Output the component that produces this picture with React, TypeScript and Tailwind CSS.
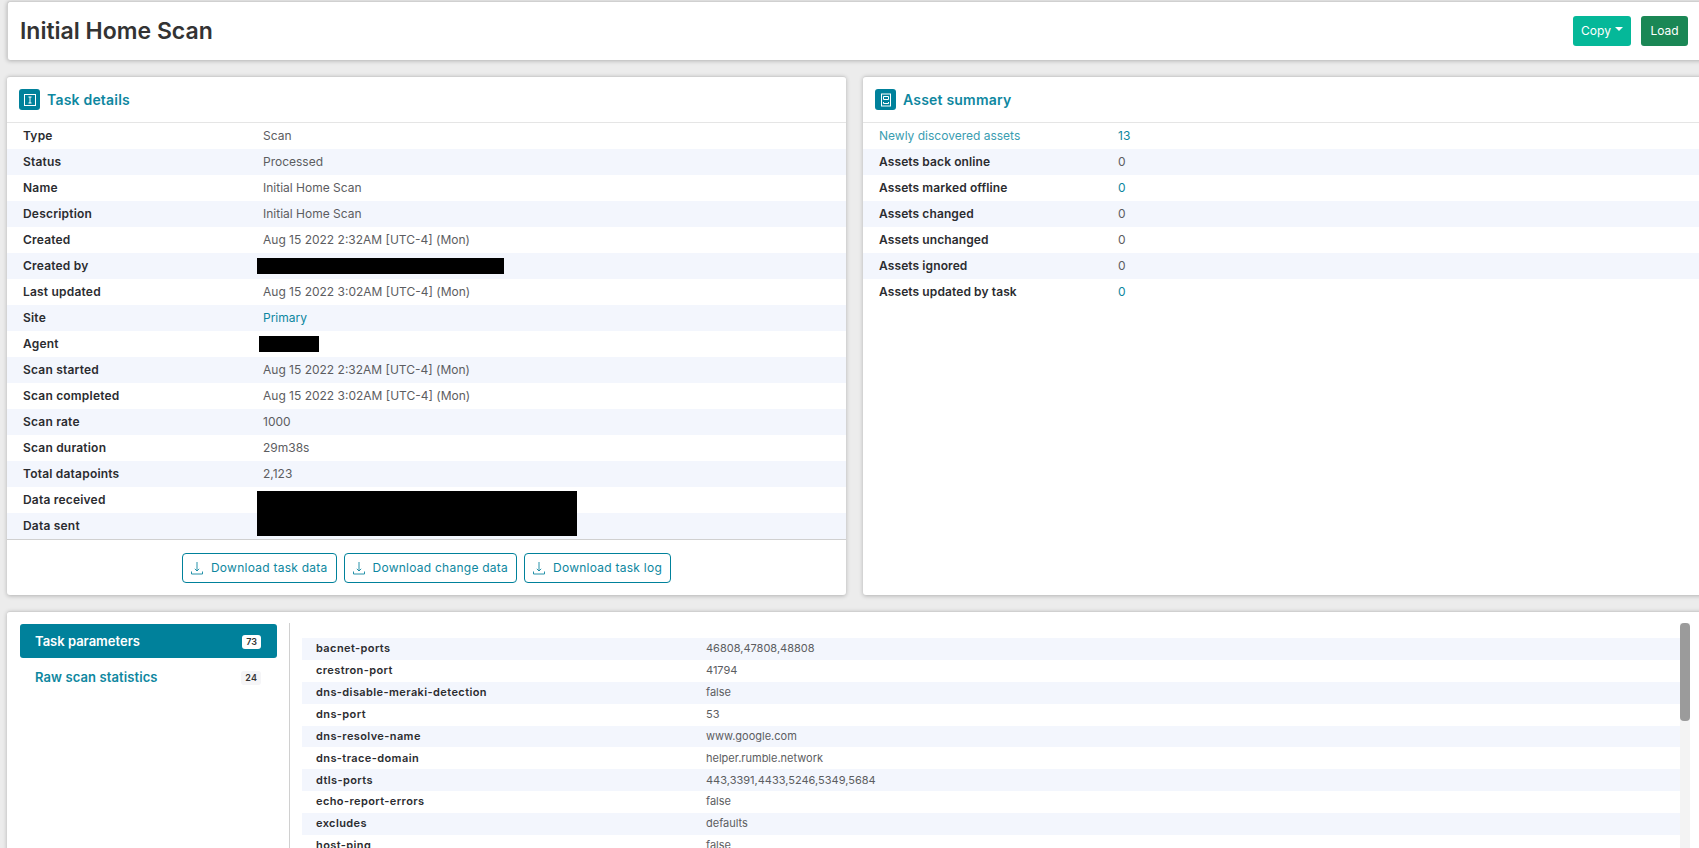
import React from "react";

const font = "font-['Inter','Liberation_Sans',sans-serif]";

const detailRows: [string, string, string?][] = [
  ["Type", "Scan"],
  ["Status", "Processed"],
  ["Name", "Initial Home Scan"],
  ["Description", "Initial Home Scan"],
  ["Created", "Aug 15 2022 2:32AM [UTC-4] (Mon)"],
  ["Created by", "", "w-[247px] -ml-[6px]"],
  ["Last updated", "Aug 15 2022 3:02AM [UTC-4] (Mon)"],
  ["Site", "Primary"],
  ["Agent", "", "w-[60px] -ml-[4px]"],
  ["Scan started", "Aug 15 2022 2:32AM [UTC-4] (Mon)"],
  ["Scan completed", "Aug 15 2022 3:02AM [UTC-4] (Mon)"],
  ["Scan rate", "1000"],
  ["Scan duration", "29m38s"],
  ["Total datapoints", "2,123"],
  ["Data received", ""],
  ["Data sent", ""],
];

const assetRows = [
  { label: "Newly discovered assets", value: "13", link: true, valueLink: true },
  { label: "Assets back online", value: "0" },
  { label: "Assets marked offline", value: "0", valueLink: true },
  { label: "Assets changed", value: "0" },
  { label: "Assets unchanged", value: "0" },
  { label: "Assets ignored", value: "0" },
  { label: "Assets updated by task", value: "0", valueLink: true },
];

const params = [
  ["bacnet-ports", "46808,47808,48808"],
  ["crestron-port", "41794"],
  ["dns-disable-meraki-detection", "false"],
  ["dns-port", "53"],
  ["dns-resolve-name", "www.google.com"],
  ["dns-trace-domain", "helper.rumble.network"],
  ["dtls-ports", "443,3391,4433,5246,5349,5684"],
  ["echo-report-errors", "false"],
  ["excludes", "defaults"],
  ["host-ping", "false"],
];

const DownloadIcon = () => (
  <svg width="14" height="14" viewBox="0 0 14 14" fill="none" stroke="currentColor" strokeWidth="0.9">
    <path d="M7 1v9M4.8 7.8 7 10l2.2-2.2M1.5 10.5v2.5h11v-2.5" />
  </svg>
);

const InfoIcon = () => (
  <svg width="14" height="14" viewBox="0 0 14 14" fill="none" stroke="white" strokeWidth="1">
    <rect x="1.5" y="1.5" width="11" height="11" />
    <path d="M5.5 4h3M7 4v6M5.5 10h3" />
  </svg>
);

const AssetIcon = () => (
  <svg width="14" height="14" viewBox="0 0 14 14" fill="none" stroke="white" strokeWidth="1">
    <rect x="2.5" y="1" width="9" height="12" />
    <path d="M4.5 3.5h5v3h-5z" />
    <path d="M4.5 9v1.5h5V9" />
  </svg>
);

const CardHeader = ({ icon, title }: { icon: React.ReactNode; title: string }) => (
  <div className="flex items-center gap-[7px] h-[46px] pl-3 border-b border-[#e5e5e5]">
    <div className="w-[21px] h-[21px] rounded-[3px] bg-[#00819b] flex items-center justify-center">{icon}</div>
    <h2 className="text-[14px] font-semibold tracking-[0.2px] text-[#0e87a0]">{title}</h2>
  </div>
);

const DownloadButton = ({ label }: { label: string }) => (
  <button className="flex items-center gap-[7px] h-[30px] pl-[7px] pr-[8px] border border-[#00819b] rounded-[4px] text-[12px] tracking-[0.25px] text-[#0e87a0] bg-white">
    <DownloadIcon />
    {label}
  </button>
);

export default function App() {
  return (
    <div className={`${font} w-[1699px] h-[848px] overflow-hidden bg-[#ececec] text-[#3a3b3f] pl-[7px] pt-px`}>
      {/* Page title */}
      <div className="w-[1720px] h-[59px] bg-white rounded-[3px] border-t border-l border-[#d0d0d0] shadow-[0_1px_4px_rgba(0,0,0,0.25)] flex items-center justify-between pl-[12px] pr-[39px]">
        <h1 className="text-[23px] font-semibold text-[#333]">Initial Home Scan</h1>
        <div className="flex items-center gap-[10px]">
          <button className="h-[30px] w-[58px] rounded-[3px] bg-[#05b899] text-white text-[12px] flex items-center justify-center gap-1">
            Copy
            <span className="border-x-[4px] border-x-transparent border-t-[4px] border-t-white -mt-1" />
          </button>
          <button className="h-[30px] w-[47px] rounded-[3px] bg-[#1a8755] text-white text-[12px]">Load</button>
        </div>
      </div>

      <div className="flex gap-[17px] mt-4">
        {/* Task details */}
        <div className="w-[839px] h-[519px] shrink-0 bg-white rounded-[3px] border-t border-[#d0d0d0] shadow-[0_1px_4px_rgba(0,0,0,0.25)] flex flex-col">
          <CardHeader icon={<InfoIcon />} title="Task details" />
          <div className="relative">
            {detailRows.map(([label, value, redact], i) => (
              <div key={label} className={`flex items-center h-[26px] text-[12px] ${i % 2 ? "bg-[#f3f6fd]" : ""}`}>
                <div className="w-[256px] pl-[16px] font-semibold tracking-[0.2px] text-[#2b2c30]">{label}</div>
                {redact ? (
                  <div className={`h-[16px] bg-black ${redact}`} />
                ) : (
                  <div className={label === "Site" ? "text-[#0e87a0]" : "text-[#5c5d61]"}>{value}</div>
                )}
              </div>
            ))}
            <div className="absolute left-[250px] top-[368px] w-[320px] h-[45px] bg-black" />
          </div>
          <div className="flex-1 border-t border-[#d0d0d0] flex items-center justify-center gap-[7px]">
            <DownloadButton label="Download task data" />
            <DownloadButton label="Download change data" />
            <DownloadButton label="Download task log" />
          </div>
        </div>

        {/* Asset summary */}
        <div className="w-[860px] h-[519px] shrink-0 bg-white rounded-[3px] border-t border-[#d0d0d0] shadow-[0_1px_4px_rgba(0,0,0,0.25)]">
          <CardHeader icon={<AssetIcon />} title="Asset summary" />
          {assetRows.map((r, i) => (
            <div key={r.label} className={`flex items-center h-[26px] text-[12px] ${i % 2 ? "bg-[#f3f6fd]" : ""}`}>
              <div className={`w-[255px] pl-[16px] ${r.link ? "text-[#3a9db1]" : "font-semibold tracking-[0.1px] text-[#2b2c30]"}`}>{r.label}</div>
              <div className={r.valueLink ? "text-[#0e87a0]" : "text-[#5c5d61]"}>{r.value}</div>
            </div>
          ))}
        </div>
      </div>

      {/* Parameters */}
      <div className="w-[1720px] h-[300px] mt-4 bg-white rounded-[3px] border-t border-[#d0d0d0] shadow-[0_1px_4px_rgba(0,0,0,0.25)] flex pt-[12px] pl-[13px]">
        <div className="w-[257px] shrink-0">
          <div className="h-[34px] pt-px rounded-[3px] bg-[#00819b] flex items-center justify-between pl-[15px] pr-4 text-white text-[13px] font-semibold">
            Task parameters
            <span className="h-[14px] px-[4px] rounded-[3px] bg-white text-[#333] text-[9px] font-semibold flex items-center">73</span>
          </div>
          <div className="h-[38px] pt-px flex items-center justify-between pl-[15px] pr-4 text-[#0e87a0] text-[13px] font-semibold tracking-[0.1px]">
            Raw scan statistics
            <span className="h-[14px] px-[4px] rounded-[3px] bg-[#f5f5f7] text-[#333] text-[9px] font-semibold flex items-center">24</span>
          </div>
        </div>
        <div className="w-[1px] h-[300px] -mt-px ml-[12px] bg-[#d0d0d0] shrink-0" />
        <div className="w-[1378px] ml-[12px] pt-[14px] shrink-0">
          {params.map(([k, v], i) => (
            <div key={k} className={`flex items-center h-[21.9px] pb-px text-[11px] ${i % 2 ? "" : "bg-[#f3f6fd]"}`}>
              <div className="w-[404px] pl-[14px] font-semibold tracking-[0.4px] text-[#2b2c30]">{k}</div>
              <div className="text-[#5c5d61]">{v}</div>
            </div>
          ))}
        </div>
        <div className="w-[10px] bg-[#f3f3f3] shrink-0 -mt-px">
          <div className="h-[98px] rounded-[4px] bg-[#9b9b9b]" />
        </div>
      </div>
    </div>
  );
}
